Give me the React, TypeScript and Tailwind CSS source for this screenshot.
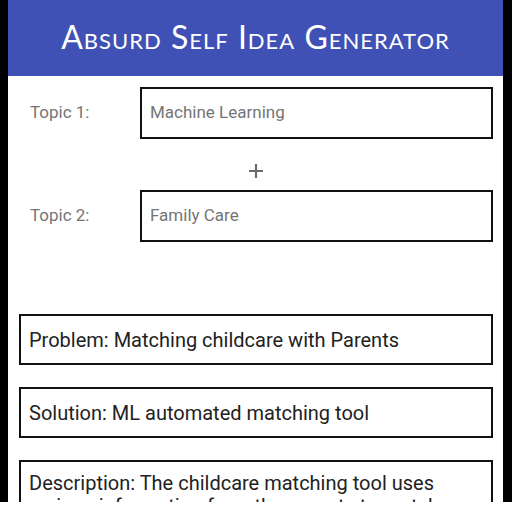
import React from 'react';

const FONT = { fontFamily: 'Roboto, "Noto Sans", sans-serif' };

function TopicRow({ label, value }: { label: string; value: string }) {
  return (
    <div className="flex items-center h-[52px]">
      <div className="w-[132px] pl-[22px] text-[17px] text-[#757575]">{label}</div>
      <div className="flex-1 h-full mr-[10px] border-2 border-[#111] flex items-center px-[8px] text-[17px] text-[#757575]">
        {value}
      </div>
    </div>
  );
}

function OutputBox({ children, open }: { children: React.ReactNode; open?: boolean }) {
  return (
    <div
      className={
        open
          ? 'mr-[10px] ml-[11px] border-2 border-b-0 border-[#111] px-[8px] pt-[10px] text-[20px] leading-[23px] text-[#222]'
          : 'mr-[10px] ml-[11px] h-[51px] border-2 border-[#111] px-[8px] flex items-center text-[20px] text-[#222]'
      }
    >
      {children}
    </div>
  );
}

export default function App() {
  return (
    <div className="w-[512px] h-[512px] bg-white overflow-hidden" style={FONT}>
      <div className="flex h-[502px] bg-black">
        <div className="w-[8px]" />
        <div className="w-[495px] bg-white flex flex-col overflow-hidden">
          <div className="h-[76px] shrink-0 bg-[#3f51b5] flex items-center justify-center">
            <h1
              className="text-white text-[32px] tracking-[1px] pb-[2px]"
              style={{ fontFamily: 'Lato, "Open Sans", sans-serif', fontVariant: 'small-caps' }}
            >
              Absurd Self Idea Generator
            </h1>
          </div>

          <div className="pt-[11px]">
            <TopicRow label="Topic 1:" value="Machine Learning" />
            <div className="h-[51px] flex justify-center pt-[24px]">
              <svg width="16" height="16" viewBox="0 0 16 16">
                <path d="M8 1v14M1 8h14" stroke="#6b6b6b" strokeWidth="2.2" />
              </svg>
            </div>
            <TopicRow label="Topic 2:" value="Family Care" />
          </div>

          <div className="mt-[72px] flex flex-col gap-[22px]">
            <OutputBox>Problem: Matching childcare with Parents</OutputBox>
            <OutputBox>Solution: ML automated matching tool</OutputBox>
            <OutputBox open>
              Description: The childcare matching tool uses various information from the parents to match
              them with suitable childcare providers nearby.
            </OutputBox>
          </div>
        </div>
        <div className="flex-1" />
      </div>
    </div>
  );
}
